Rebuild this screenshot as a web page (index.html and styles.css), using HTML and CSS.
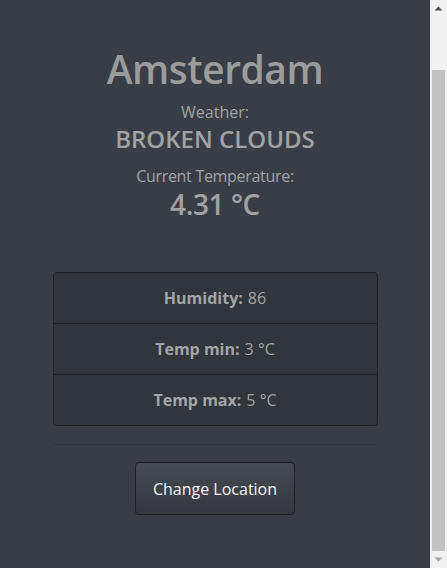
FILE: index.html
```html
<!DOCTYPE html>
<html lang="en">
<head>
<meta charset="utf-8">
<title>Weather</title>
<link rel="stylesheet" href="styles.css">
</head>
<body>
<div class="window">
  <main class="app">
    <section class="current">
      <h1 class="city">Amsterdam</h1>
      <p class="label">Weather:</p>
      <h3 class="condition">BROKEN CLOUDS</h3>
      <p class="label label-temp">Current Temperature:</p>
      <h2 class="temp">4.31 °C</h2>
    </section>
    <ul class="details">
      <li class="detail"><strong>Humidity:</strong> 86</li>
      <li class="detail"><strong>Temp min:</strong> 3 °C</li>
      <li class="detail"><strong>Temp max:</strong> 5 °C</li>
    </ul>
    <hr class="divider">
    <div class="actions">
      <button class="btn" type="button">Change Location</button>
    </div>
  </main>
  <div class="scrollbar" aria-hidden="true">
    <div class="sb-btn">
      <svg width="17" height="17" viewBox="0 0 17 17"><path d="M4.5 10.5h8L8.5 6.5z" fill="#505050"/></svg>
    </div>
    <div class="sb-track"><div class="sb-thumb"></div></div>
    <div class="sb-btn">
      <svg width="17" height="17" viewBox="0 0 17 17"><path d="M4.5 6.5h8L8.5 10.5z" fill="#a3a3a3"/></svg>
    </div>
  </div>
</div>
</body>
</html>
```
FILE: styles.css
```css
html, body {
  height: 100%;
}
body {
  margin: 0;
  background: #393e46;
  color: #a4a4a4;
  font-family: "Open Sans", "Noto Sans", sans-serif;
  overflow: hidden;
}
.window {
  display: flex;
  height: 100%;
}
.app {
  flex: 1;
  display: flex;
  flex-direction: column;
  align-items: center;
  padding-top: 42px;
}
.app > * {
  width: 323px;
}
.current {
  display: flex;
  flex-direction: column;
  align-items: center;
  text-align: center;
}
.city {
  margin: 0 0 5px;
  font-size: 39px;
  font-weight: 600;
  letter-spacing: -0.5px;
  line-height: 54px;
  color: #9c9c9c;
}
.label {
  margin: 0;
  font-size: 16px;
  line-height: 22px;
  color: #a3a3a3;
}
.label-temp {
  letter-spacing: -0.3px;
}
.condition {
  margin: 0 0 10px;
  font-size: 24px;
  font-weight: 600;
  line-height: 32px;
  color: #a2a2a2;
}
.temp {
  margin: 0;
  font-size: 28px;
  font-weight: 600;
  letter-spacing: -0.4px;
  line-height: 34px;
  color: #a2a2a2;
}
.details {
  list-style: none;
  margin: 51px 0 0;
  padding: 0;
  background: #31353c;
  border: 1px solid #1e2024;
  border-radius: 4px;
}
.detail {
  height: 50px;
  display: flex;
  align-items: center;
  justify-content: center;
  font-size: 16px;
  color: #a4a4a4;
}
.detail + .detail {
  border-top: 1px solid #1e2024;
}
.detail strong {
  font-weight: 700;
  margin-right: 5px;
}
.divider {
  margin: 18px 0 17px;
  border: 0;
  border-top: 1px solid #31353b;
}
.actions {
  display: flex;
  justify-content: center;
}
.btn {
  width: 160px;
  height: 53px;
  border: 1px solid #1d1f22;
  border-radius: 4px;
  background: linear-gradient(#464b53, #34383e);
  color: #f4f4f4;
  font-family: "Open Sans", "Noto Sans", sans-serif;
  font-size: 16px;
}
.scrollbar {
  width: 17px;
  flex: none;
  display: flex;
  flex-direction: column;
  background: #f1f1f1;
}
.sb-btn {
  height: 17px;
  flex: none;
  display: flex;
}
.sb-track {
  flex: 1;
  display: flex;
  flex-direction: column;
  padding: 53px 2px 0;
}
.sb-thumb {
  flex: 1;
  background: #c1c1c1;
}
```
